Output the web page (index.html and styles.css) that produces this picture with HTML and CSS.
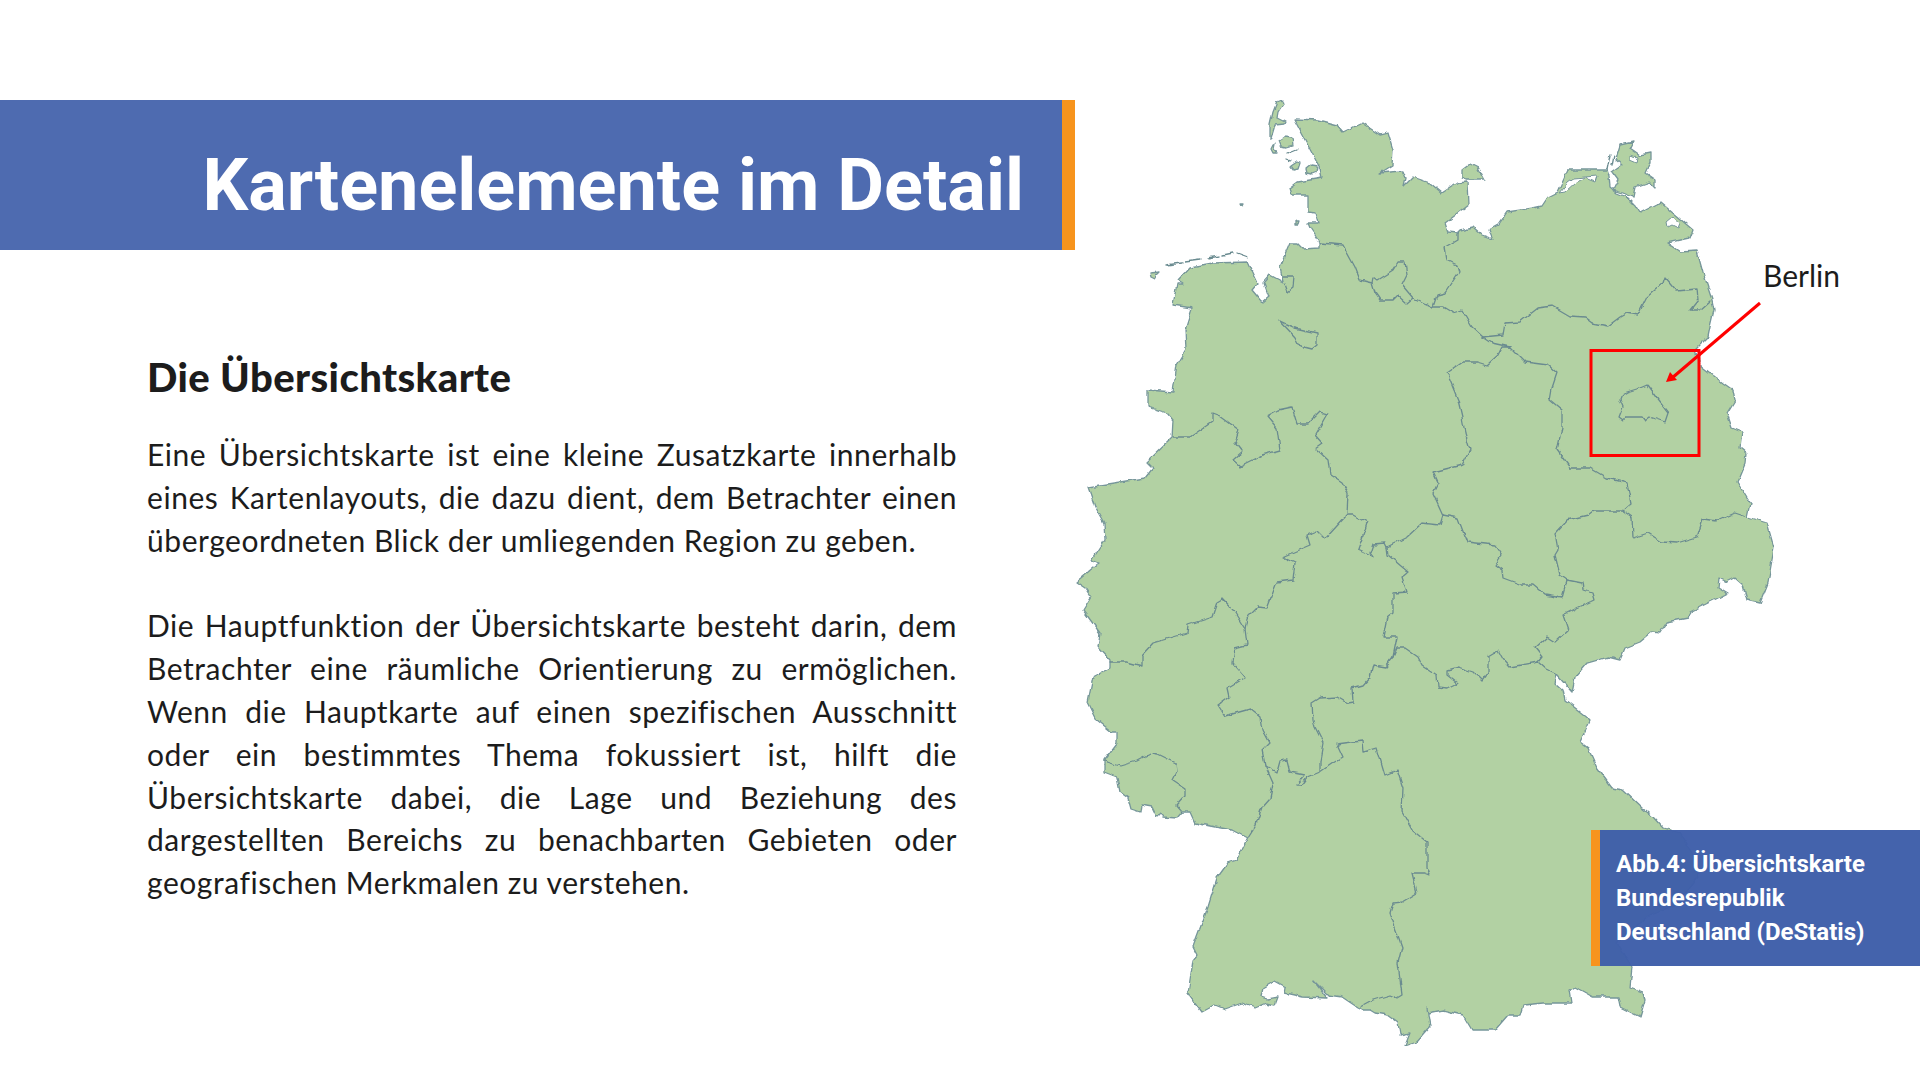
FILE: index.html
```html
<!DOCTYPE html>
<html lang="de">
<head>
<meta charset="utf-8">
<title>Kartenelemente im Detail</title>
<link rel="stylesheet" href="styles.css">
</head>
<body>
<main class="slide">
  <section class="left">
    <header class="banner"><h1 class="title">Kartenelemente im Detail</h1></header>
    <div class="content">
      <h2 class="heading">Die Übersichtskarte</h2>
      <p class="para">Eine Übersichtskarte ist eine kleine Zusatzkarte innerhalb eines Kartenlayouts, die dazu dient, dem Betrachter einen übergeordneten Blick der umliegenden Region zu geben.</p>
      <p class="para">Die Hauptfunktion der Übersichtskarte besteht darin, dem Betrachter eine räumliche Orientierung zu ermöglichen. Wenn die Hauptkarte auf einen spezifischen Ausschnitt oder ein bestimmtes Thema fokussiert ist, hilft die Übersichtskarte dabei, die Lage und Beziehung des dargestellten Bereichs zu benachbarten Gebieten oder geografischen Merkmalen zu verstehen.</p>
    </div>
  </section>
  <figure class="figure">
    <svg class="map" viewBox="1075 0 845 1080" width="845" height="1080" aria-label="Karte Deutschland">
      <defs>
        <filter id="wiggle" x="0" y="0" width="100%" height="100%" filterUnits="objectBoundingBox">
          <feTurbulence type="fractalNoise" baseFrequency="0.11" numOctaves="2" seed="4" result="n"/>
          <feDisplacementMap in="SourceGraphic" in2="n" scale="5" xChannelSelector="R" yChannelSelector="G"/>
          <feGaussianBlur stdDeviation="0.4"/>
        </filter>
      </defs>
      <g class="land">
        <path class="shape" d="M1294,119 L1318,120 1337,125 1343,132 1362,123 1380,135 1388,133 1393,150 1392,165 1379,173 1402,171 1405,178 1403,187 1413,177 1430,183 1442,193 1457,183 1468,182 1469,205 1445,223 1448,232 1457,233 1460,230 1473,227 1482,235 1493,239 1489,230 1498,225 1507,212 1533,208 1542,206 1548,197 1558,192 1568,170 1607,170 1609,176 1610,187 1617,193 1627,197 1635,205 1640,213 1657,204 1660,202 1673,213 1693,230 1690,238 1667,243 1680,252 1697,251 1703,273 1712,300 1714,310 1710,327 1708,337 1695,350 1700,365 1723,383 1733,390 1735,400 1727,413 1732,428 1742,432 1740,448 1746,453 1745,463 1737,482 1750,503 1747,517 1767,523 1774,548 1768,583 1760,603 1747,600 1743,585 1735,578 1727,582 1719,578 1718,587 1728,593 1690,612 1688,618 1667,622 1660,633 1652,632 1640,642 1625,648 1620,660 1608,657 1587,663 1575,677 1572,692 1557,675 1555,683 1563,690 1565,700 1588,718 1590,720 1580,742 1588,748 1597,768 1612,788 1623,790 1642,808 1653,817 1663,828 1680,833 1693,853 1698,877 1673,907 1647,917 1617,943 1632,967 1630,987 1643,992 1645,1000 1640,1017 1620,1007 1618,997 1593,997 1575,987 1570,990 1572,1003 1543,1003 1523,1005 1520,1015 1508,1015 1495,1030 1472,1030 1463,1015 1443,1010 1428,1013 1427,1008 1430,1027 1417,1042 1405,1046 1410,1033 1400,1035 1398,1023 1387,1015 1375,1013 1370,1010 1363,1010 1357,1007 1342,997 1328,995 1313,980 1327,998 1303,997 1285,993 1286,987 1275,981 1263,988 1261,997 1267,999 1278,997 1275,1005 1267,1003 1255,1008 1242,1003 1225,1009 1215,1005 1202,1012 1188,993 1193,960 1197,955 1193,947 1208,907 1217,878 1228,863 1237,860 1248,838 1233,830 1215,827 1195,823 1190,812 1182,812 1177,818 1163,817 1160,814 1157,817 1152,807 1141,805 1140,812 1131,809 1128,798 1120,792 1117,777 1104,772 1104,760 1117,743 1117,732 1112,732 1097,720 1088,702 1093,677 1110,668 1110,660 1098,647 1100,633 1083,610 1091,597 1085,588 1076,582 1099,563 1092,560 1105,540 1104,523 1095,507 1088,487 1120,482 1145,478 1153,468 1147,462 1172,438 1173,420 1167,413 1148,407 1148,390 1173,392 1177,365 1186,350 1185,330 1192,308 1173,305 1177,283 1183,283 1178,280 1190,267 1213,263 1248,262 1258,283 1252,290 1262,302 1268,297 1263,283 1270,275 1283,282 1280,267 1290,243 1297,243 1303,249 1320,248 1320,243 1310,228 1308,223 1318,223 1315,213 1308,212 1308,195 1292,195 1290,188 1298,182 1322,178 1320,168 1313,155 Z"/>
        <path class="shape" d="M1462,170 L1470,164 1478,168 1484,179 1467,179 1462,177 Z"/>
        <path class="shape" d="M1617,155 L1620,145 1633,142 1630,148 1640,155 1650,153 1650,162 1645,173 1655,180 1655,187 1650,182 1635,187 1633,197 1623,193 1613,190 1618,180 1612,172 1622,165 1616,160 Z"/>
        <path class="shape" d="M1277,102 L1282,100 1283,104 1278,112 1277,118 1285,122 1284,124 1275,125 1272,135 1271,138 1270,139 1270,125 1273,112 Z"/>
        <path class="shape" d="M1279,141 L1285,137 1292,138 1293,145 1286,147 1281,146 Z"/>
        <path class="shape" d="M1273,145 L1275,144 1274,149 1277,153 1273,153 1271,149 Z"/>
        <path class="shape" d="M1291,166 L1297,162 1300,163 1298,169 1294,170 Z"/>
        <path class="shape" d="M1306,169 L1311,165 1317,166 1316,172 1311,174 1307,173 Z"/>
        <path class="shape" d="M1150,273 L1160,272 1156,276 1155,279 1151,277 Z"/>
        <path class="shape" d="M1241,205 L1243,205 1242,207 Z"/>
        <path class="shape" d="M1296,221 L1299,221 1298,224 1296,224 Z"/>
        <path class="line" d="M1287,153 L1297,149 M1285,159 L1290,161 M1166,265 L1182,263 M1185,262 L1200,260 M1208,258 L1220,256 M1223,255 L1233,253 M1237,253 L1248,257 M1610,155 L1607,170 M1614,155 L1612,165"/>
        <path class="hole" d="M1560,193 L1568,183 1575,178 1597,176 1595,182 1585,178 1575,183 1565,192 Z"/>
        <path class="hole" d="M1667,222 L1673,217 1680,223 1678,228 1672,225 1668,227 Z"/>
        <path class="hole" d="M1630,155 L1638,157 1637,163 1630,160 Z"/>
        <path class="line" d="M1283,277 L1294,277 1293,288 1288,292 1285,283"/>
        <path class="line" d="M1280,321 L1295,328 1317,333 1317,345 1312,349 1300,346 1296,338 Z"/>
        <path class="line" d="M1320,243 L1343,245 1355,267 1360,280 1372,283 1375,293 1380,300 1393,300 1398,295 1407,303 1413,298 1433,307 1437,295 1445,293 1459,272 1457,265 1447,260 1445,247 1457,240 1457,233"/>
        <path class="line" d="M1372,283 L1373,277 1377,280 1393,270 1398,262 1405,262 1407,275 1402,285 1413,298"/>
        <path class="line" d="M1433,307 L1443,307 1453,313 1462,310 1472,327 1483,337 1493,336 1503,335 1505,323 1520,322 1538,308 1553,306 1570,316 1585,317 1593,323 1608,326 1620,317 1627,313 1638,315 1647,297 1663,283 1665,277 1677,291 1697,289 1698,300 1690,310 1700,310 1710,301"/>
        <path class="line" d="M1483,337 L1492,343 1510,347 1525,362 1548,365 1557,373 1552,388 1550,400 1562,410 1562,428 1557,450 1570,468 1590,468 1607,478 1627,483 1631,503 1622,511 1632,518 1633,538 1648,533 1662,542 1677,543 1697,537 1703,519 1717,521 1735,513 1747,517"/>
        <path class="line" d="M1622,511 L1593,511 1588,515 1567,520 1555,533 1558,550 1555,555 1560,575 1567,580 1582,583 1583,590 1592,593 1594,600 1577,608 1563,615 1568,630 1555,642 1547,637 1535,648 1542,657 1538,662 1547,670 1557,675"/>
        <path class="line" d="M1567,580 L1562,598 1545,595 1533,585 1522,585 1503,578 1502,570 1495,565 1502,555 1495,545 1467,542 1458,518 1443,515"/>
        <path class="line" d="M1443,515 L1433,493 1438,483 1433,472 1462,465 1470,450 1465,433 1462,417 1458,400 1447,373 1463,362 1477,362 1487,365 1498,355 1502,347 1510,347"/>
        <path class="line" d="M1443,515 L1440,525 1422,523 1407,537 1387,547 1385,543 1373,544 1370,553 1373,557 1358,550 1365,530 1367,523 1353,515 1347,515"/>
        <path class="line" d="M1387,547 L1388,555 1408,572 1402,577 1407,592 1393,593 1393,612 1387,617 1383,637 1397,637 1393,657"/>
        <path class="line" d="M1347,515 L1348,493 1342,483 1330,475 1328,460 1315,448 1322,443 1315,435 1327,414 1320,412 1308,424 1297,424 1292,407 1278,410 1267,416 1277,428 1280,450 1262,455 1240,466 1233,460 1242,452 1235,443 1239,430 1220,416 1212,413 1212,422 1190,437 1173,437"/>
        <path class="line" d="M1347,515 L1325,539 1317,531 1307,535 1310,545 1282,557 1295,563 1293,580 1277,582 1267,608 1258,607 1247,618 1245,629"/>
        <path class="line" d="M1245,629 L1233,610 1223,599 1218,602 1213,617 1188,625 1187,633 1153,643 1142,655 1142,666 1127,662 1110,662"/>
        <path class="line" d="M1245,629 L1247,645 1235,648 1233,663 1245,677 1227,688 1229,697 1218,705 1225,716 1250,709 1260,717 1262,730 1269,743 1262,750 1265,765 1273,783 1270,798 1262,807 1255,827 1248,838"/>
        <path class="line" d="M1104,761 L1120,766 1137,761 1152,753 1158,754 1176,763 1177,772 1173,780 1185,788 1185,795 1176,805 1182,812"/>
        <path class="line" d="M1265,765 L1277,772 1280,761 1287,760 1290,772 1305,775 1297,785 1302,785 1308,777 1320,772 1320,760 1323,743 1315,727 1313,720 1312,703 1320,698 1337,697 1347,703 1353,702 1352,688 1363,685 1370,677 1373,665 1385,667 1393,657 1397,648 1405,648 1418,657 1422,665 1437,675 1438,687 1447,688 1457,683 1447,675 1447,670 1458,667 1473,672 1482,681 1488,673 1488,657 1498,651 1502,658 1510,667 1538,662"/>
        <path class="line" d="M1320,772 L1333,763 1343,757 1337,744 1352,742 1362,741 1363,752 1377,748 1385,775 1397,770 1403,788 1402,812 1412,830 1427,842 1427,867 1430,875 1425,873 1412,873 1417,893 1402,902 1393,903 1390,913 1402,947 1398,963 1402,995 1397,998 1390,995 1373,1000 1360,1007"/>
        <path class="line" d="M1622,395 L1627,392 1640,388 1647,385 1658,400 1668,413 1665,422 1650,417 1645,421 1642,417 1625,417 1623,420 1619,417 1623,407 1620,400 Z"/>
      </g>
      <rect class="box" x="1591" y="350.5" width="108" height="105"/>
      <path class="arrow-line" d="M1760,303 L1672,378"/>
      <path class="arrow-head" d="M1666,382 L1670,372 1677,380 Z"/>
    </svg>
    <span class="pin-label">Berlin</span>
    <figcaption class="caption">Abb.4: Übersichtskarte Bundesrepublik Deutschland (DeStatis)</figcaption>
  </figure>
</main>
</body>
</html>
```
FILE: styles.css
```css
html, body { margin: 0; padding: 0; background: #fff; }
.slide {
  width: 1920px; height: 1080px; overflow: hidden;
  display: grid; grid-template-columns: 1075px 845px;
  color: #1c1c1c; background: #fff;
}
.left { padding-top: 100px; }
.banner {
  height: 150px; box-sizing: border-box;
  background: #4e6bb0; border-right: 13px solid #f7941d;
  display: flex; align-items: center; justify-content: flex-end;
  padding: 22px 38px 0 0;
}
.title {
  margin: 0; color: #fff;
  font: 700 72px/1 Roboto, sans-serif;
}
.content { padding: 102px 118px 0 147px; }
.heading {
  margin: 0 0 31px; color: #1c1c1c;
  font: 900 40px/50px Lato, sans-serif;
  letter-spacing: 0.4px;
}
.para {
  margin: 0 0 43px; text-align: justify;
  font: 400 30px/42.8px Lato, sans-serif;
  letter-spacing: 0.55px; font-variant-ligatures: none;
}
.figure { position: relative; margin: 0; }
.map { display: block; }
.land { filter: url(#wiggle); }
.shape { fill: #b2d1a3; stroke: #76969a; stroke-width: 1.3; stroke-linejoin: round; }
.line { fill: none; stroke: #6a8b90; stroke-width: 1.3; stroke-linejoin: round; stroke-linecap: round; }
.hole { fill: #fff; stroke: #76969a; stroke-width: 1; }
.box { fill: none; stroke: #ff0000; stroke-width: 3; }
.arrow-line { fill: none; stroke: #ff0000; stroke-width: 3; }
.arrow-head { fill: #ff0000; }
.pin-label {
  position: absolute; left: 688px; top: 257px;
  font: 400 30px/36px Lato, sans-serif; color: #1c1c1c;
}
.caption {
  position: absolute; left: 516px; right: 0; top: 830px; height: 136px;
  box-sizing: border-box; padding: 17px 20px 0 16px;
  background: rgba(62, 94, 169, 0.97); border-left: 9px solid #f7941d;
  color: #fff; font: 700 24px/34px Roboto, sans-serif;
}
```
